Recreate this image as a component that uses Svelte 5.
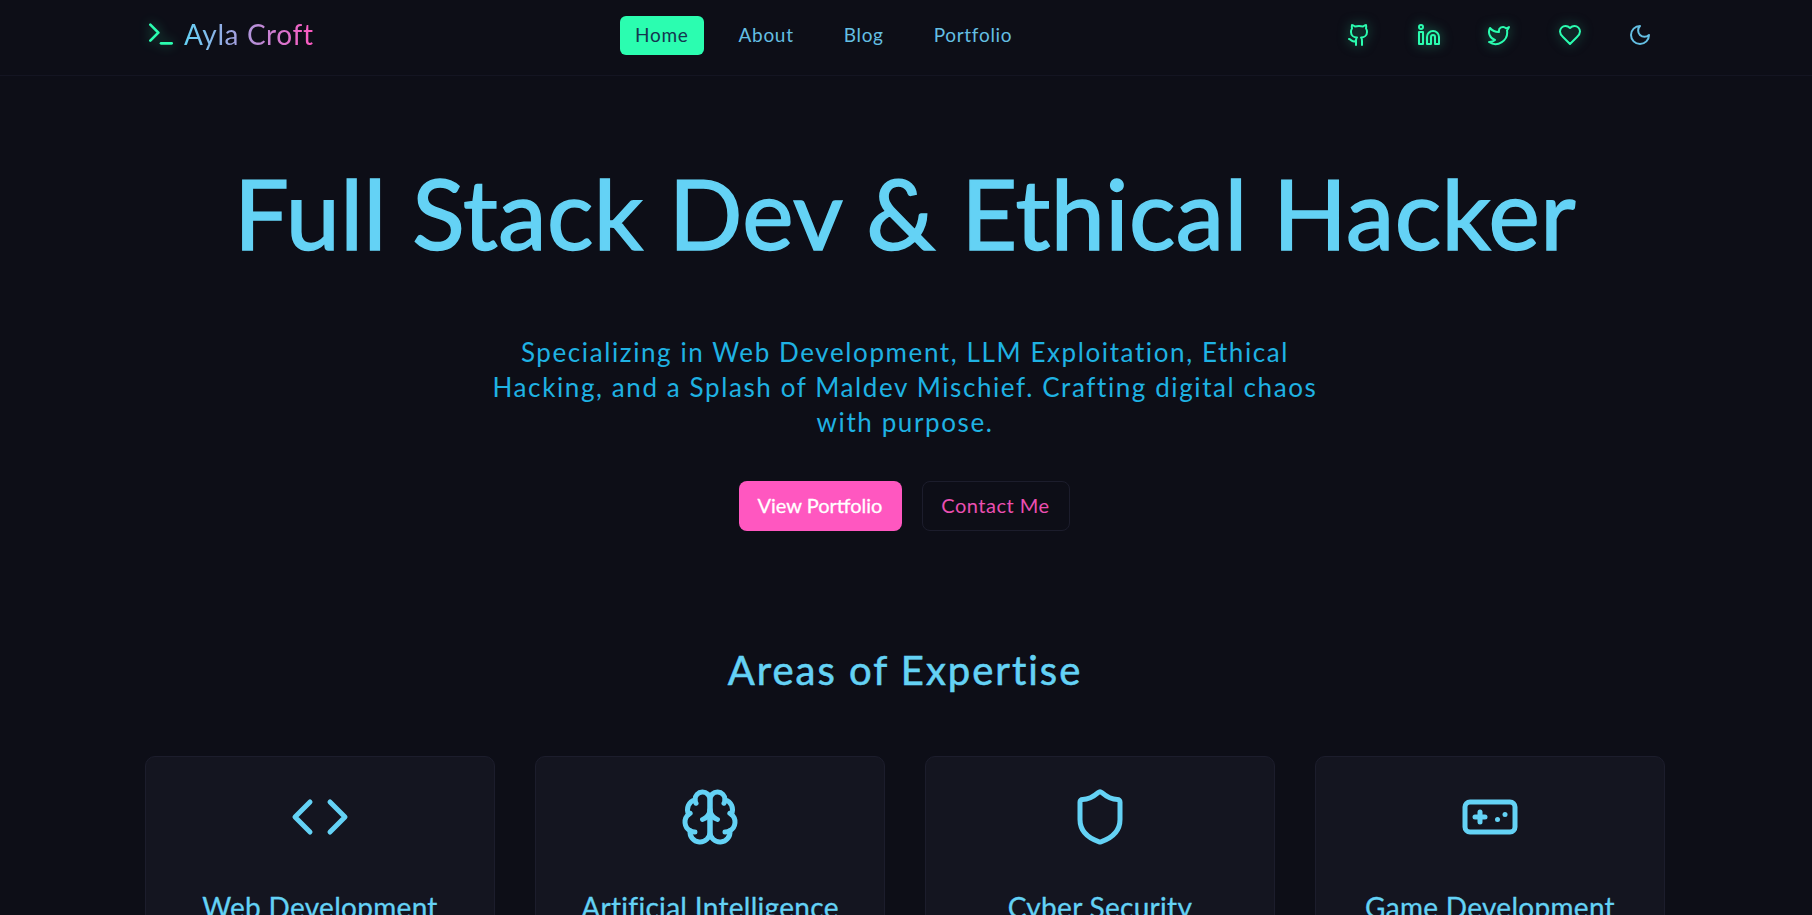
<script>
	const links = ['Home', 'About', 'Blog', 'Portfolio'];

	const cards = [
		{ title: 'Web Development', icon: 'code' },
		{ title: 'Artificial Intelligence', icon: 'brain' },
		{ title: 'Cyber Security', icon: 'shield' },
		{ title: 'Game Development', icon: 'gamepad' }
	];
</script>

<div class="page">
	<header>
		<a class="logo" href="#top">
			<svg class="term" viewBox="0 0 24 24"><polyline points="4 17 10 11 4 5" /><line x1="12" y1="19" x2="20" y2="19" /></svg>
			<span class="name">Ayla Croft</span>
		</a>

		<nav>
			{#each links as link, i}
				<a class:active={i === 0} href="#top">{link}</a>
			{/each}
		</nav>

		<div class="socials">
			<a class="glow" href="#top" aria-label="GitHub">
				<svg viewBox="0 0 24 24"><path d="M15 22v-4a4.8 4.8 0 0 0-1-3.5c3 0 6-2 6-5.5.08-1.25-.27-2.48-1-3.5.28-1.15.28-2.35 0-3.5 0 0-1 0-3 1.5-2.64-.5-5.36-.5-8 0C6 2 5 2 5 2c-.3 1.15-.3 2.35 0 3.5A5.403 5.403 0 0 0 4 9c0 3.5 3 5.5 6 5.5-.39.49-.68 1.05-.85 1.65-.17.6-.22 1.23-.15 1.85v4" /><path d="M9 18c-4.51 2-5-2-7-2" /></svg>
			</a>
			<a class="glow" href="#top" aria-label="LinkedIn">
				<svg viewBox="0 0 24 24"><path d="M16 8a6 6 0 0 1 6 6v7h-4v-7a2 2 0 0 0-2-2 2 2 0 0 0-2 2v7h-4v-7a6 6 0 0 1 6-6z" /><rect width="4" height="12" x="2" y="9" /><circle cx="4" cy="4" r="2" /></svg>
			</a>
			<a class="glow" href="#top" aria-label="Twitter">
				<svg viewBox="0 0 24 24"><path d="M22 4s-.7 2.1-2 3.4c1.6 10-9.4 17.3-18 11.6 2.2.1 4.4-.6 6-2C3 15.5.5 9.6 3 5c2.2 2.6 5.6 4.1 9 4-.9-4.2 4-6.6 7-3.8 1.1 0 3-1.2 3-1.2z" /></svg>
			</a>
			<a class="glow" href="#top" aria-label="Favourites">
				<svg viewBox="0 0 24 24"><path d="M19 14c1.49-1.46 3-3.21 3-5.5A5.5 5.5 0 0 0 16.5 3c-1.76 0-3 .5-4.5 2-1.5-1.5-2.74-2-4.5-2A5.5 5.5 0 0 0 2 8.5c0 2.3 1.5 4.05 3 5.5l7 7Z" /></svg>
			</a>
			<a href="#top" aria-label="Theme">
				<svg viewBox="0 0 24 24"><path d="M12 3a6 6 0 0 0 9 9 9 9 0 1 1-9-9Z" /></svg>
			</a>
		</div>
	</header>

	<section class="hero">
		<h1>Full Stack Dev &amp; Ethical Hacker</h1>
		<p>Specializing in Web Development, LLM Exploitation, Ethical Hacking, and a Splash of Maldev Mischief. Crafting digital chaos with purpose.</p>
		<div class="actions">
			<a class="btn primary" href="#top">View Portfolio</a>
			<a class="btn ghost" href="#top">Contact Me</a>
		</div>
	</section>

	<section class="areas">
		<h2>Areas of Expertise</h2>
		<div class="grid">
			{#each cards as card}
				<div class="card">
					<svg class="card-icon" viewBox="0 0 24 24">
						{#if card.icon === 'code'}
							<polyline points="16 18 22 12 16 6" /><polyline points="8 6 2 12 8 18" />
						{:else if card.icon === 'brain'}
							<path d="M12 5a3 3 0 1 0-5.997.125 4 4 0 0 0-2.526 5.77 4 4 0 0 0 .556 6.588A4 4 0 1 0 12 18Z" />
							<path d="M12 5a3 3 0 1 1 5.997.125 4 4 0 0 1 2.526 5.77 4 4 0 0 1-.556 6.588A4 4 0 1 1 12 18Z" />
							<path d="M15 13a4.5 4.5 0 0 1-3-4 4.5 4.5 0 0 1-3 4" />
							<path d="M17.599 6.5a3 3 0 0 0 .399-1.375" />
							<path d="M6.003 5.125A3 3 0 0 0 6.401 6.5" />
							<path d="M3.477 10.896a4 4 0 0 1 .585-.396" />
							<path d="M19.938 10.5a4 4 0 0 1 .585.396" />
							<path d="M6 18a4 4 0 0 1-1.967-.516" />
							<path d="M19.967 17.484A4 4 0 0 1 18 18" />
						{:else if card.icon === 'shield'}
							<path d="M20 13c0 5-3.5 7.5-7.66 8.95a1 1 0 0 1-.67-.01C7.5 20.5 4 18 4 13V6a1 1 0 0 1 1-1c2 0 4.5-1.2 6.24-2.72a1.17 1.17 0 0 1 1.52 0C14.51 3.81 17 5 19 5a1 1 0 0 1 1 1z" />
						{:else}
							<line x1="6" y1="12" x2="10" y2="12" /><line x1="8" y1="10" x2="8" y2="14" />
							<line x1="15" y1="13" x2="15.01" y2="13" /><line x1="18" y1="11" x2="18.01" y2="11" />
							<rect width="20" height="12" x="2" y="6" rx="2" />
						{/if}
					</svg>
					<h3>{card.title}</h3>
				</div>
			{/each}
		</div>
	</section>
</div>

<style>
	:global(body) {
		background: #0d0e17;
		font-family: "Lato", "Noto Sans", sans-serif;
	}

	a {
		text-decoration: none;
	}

	svg {
		fill: none;
		stroke: currentColor;
		stroke-width: 2;
		stroke-linecap: round;
		stroke-linejoin: round;
		display: block;
	}

	.page {
		height: 915px;
		overflow: hidden;
		background: #0d0e17;
	}

	header {
		box-sizing: content-box;
		height: 71px;
		padding: 0 152px 4px 145px;
		border-bottom: 1px solid #141522;
		display: flex;
		align-items: center;
		justify-content: space-between;
	}

	.logo {
		display: flex;
		align-items: center;
		gap: 7px;
		margin-bottom: 4px;
	}

	.term {
		width: 32px;
		height: 32px;
		color: #2bfdb0;
		filter: drop-shadow(0 0 6px rgba(43, 253, 176, 0.45));
	}

	.name {
		font-size: 28px;
		letter-spacing: 0.6px;
		background: linear-gradient(90deg, #64d2f5, #ff57c0);
		background-clip: text;
		-webkit-background-clip: text;
		color: transparent;
	}

	nav {
		display: flex;
		gap: 20px;
		margin-right: 5px;
	}

	nav a {
		height: 39px;
		padding: 0 15px 2px;
		box-sizing: border-box;
		border-radius: 6px;
		display: flex;
		align-items: center;
		font-size: 19px;
		letter-spacing: 0.7px;
		color: #64bfe3;
	}

	nav a.active {
		background: #2bfdb0;
		color: #14364f;
	}

	.socials {
		display: flex;
		gap: 30.3px;
		margin-bottom: 2px;
	}

	.socials a {
		width: 40px;
		height: 40px;
		display: flex;
		align-items: center;
		justify-content: center;
		color: #64bfe3;
	}

	.socials a.glow {
		color: #2bfdb0;
		filter: drop-shadow(0 0 6px rgba(43, 253, 176, 0.5));
	}

	.socials svg {
		width: 24px;
		height: 24px;
	}

	.hero {
		padding: 89px 2px 0 0;
		display: flex;
		flex-direction: column;
		align-items: center;
	}

	h1 {
		margin: 0;
		font-size: 97px;
		line-height: 96px;
		font-weight: 400;
		letter-spacing: 0.45px;
		-webkit-text-stroke: 1.6px #64d2f5;
		color: #64d2f5;
		white-space: nowrap;
	}

	.hero p {
		width: 850px;
		margin: 74px 0 0;
		font-size: 26px;
		line-height: 35px;
		letter-spacing: 1.6px;
		text-align: center;
		color: #1fb2e3;
	}

	.actions {
		margin: 41px 2px 0 0;
		display: flex;
		gap: 20px;
	}

	.btn {
		height: 50px;
		box-sizing: border-box;
		padding-bottom: 2px;
		border-radius: 8px;
		display: flex;
		align-items: center;
		justify-content: center;
		font-size: 20px;
		letter-spacing: 0.5px;
	}

	.primary {
		width: 163px;
		background: #ff57c0;
		color: #fff;
		letter-spacing: 0;
		-webkit-text-stroke: 0.3px #fff;
	}

	.ghost {
		width: 148px;
		border: 1px solid #1c1d2c;
		color: #ea4fb1;
	}

	.areas {
		padding: 0 147px 0 145px;
	}

	h2 {
		margin: 119px 0 0;
		font-size: 40px;
		line-height: 40px;
		font-weight: 400;
		letter-spacing: 2px;
		-webkit-text-stroke: 0.6px #64d2f5;
		text-align: center;
		color: #64d2f5;
	}

	.grid {
		margin-top: 66px;
		display: grid;
		grid-template-columns: repeat(4, 350px);
		gap: 40px;
	}

	.card {
		box-sizing: border-box;
		min-height: 260px;
		padding: 30px 24px;
		background: #141520;
		border: 1px solid #1c1d2c;
		border-radius: 10px;
		display: flex;
		flex-direction: column;
		align-items: center;
		color: #64d2f5;
	}

	.card-icon {
		width: 60px;
		height: 60px;
	}

	h3 {
		margin: 44px 0 0;
		font-size: 28px;
		line-height: 32px;
		font-weight: 400;
		letter-spacing: 0.3px;
		-webkit-text-stroke: 0.3px #64d2f5;
		text-align: center;
	}
</style>
